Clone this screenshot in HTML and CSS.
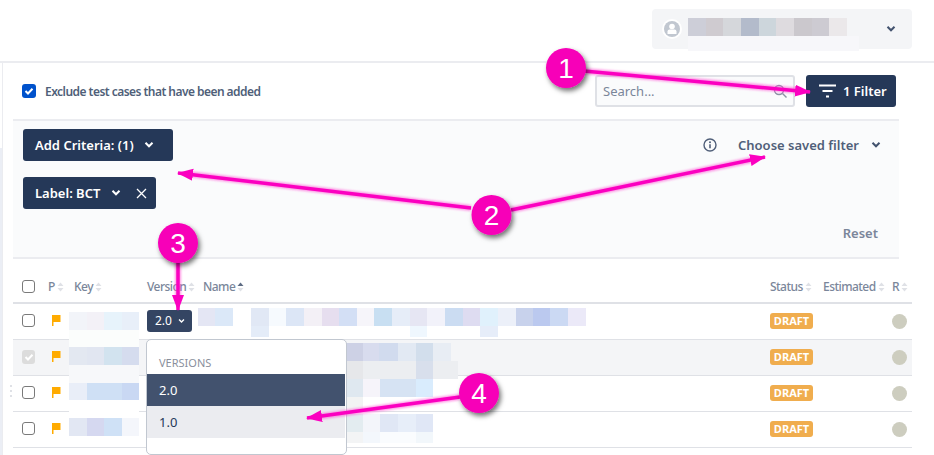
FILE: index.html
```html
<!DOCTYPE html>
<html lang="en">
<head>
<meta charset="utf-8">
<title>Add test cases</title>
<link rel="stylesheet" href="styles.css">
</head>
<body>
<svg width="0" height="0" class="defs">
  <defs>
    <symbol id="chev" viewBox="0 0 10 8"><path d="M1.5 1.8 5 5.3l3.5-3.5" fill="none" stroke="currentColor" stroke-width="2"/></symbol>
    <symbol id="sort" viewBox="0 0 7 10"><path d="M3.5 .5 6.5 4h-6zM3.5 9.500 .5 6h6z" fill="#dfe1e6"/></symbol>
    <symbol id="sortup" viewBox="0 0 7 10"><path d="M3.500 .5 6.500 4h-6z" fill="#5e6c84"/><path d="M3.500 9.500 .5 6h6z" fill="#dfe1e6"/></symbol>
    <symbol id="flag" viewBox="0 0 9 11"><path d="M0 0h8.500v7H1.500v4H0z" fill="#ffab00"/></symbol>
  </defs>
</svg>
<div class="app">
  <header class="topbar">
    <div class="usermenu">
      <svg class="avatar" width="20" height="20" viewBox="0 0 20 20"><circle cx="10" cy="10" r="10" fill="#fff"/><circle cx="10" cy="10" r="8" fill="#c1c7d0"/><circle cx="10" cy="7.500" r="2.800" fill="#fff"/><path d="M5.500 15v-2.500q0-2 2-2h5q2 0 2 2V15z" fill="#fff"/></svg>
      <svg class="chev usermenu-chev"><use href="#chev"/></svg>
    </div>
  </header>
  <div class="main">
    <div class="rail"><div class="rail-fill"></div></div>
    <div class="content">
      <div class="toolbar">
        <label class="exclude">
          <svg width="14" height="14" viewBox="0 0 14 14"><rect width="14" height="14" rx="3" fill="#0052cc"/><path d="M3.500 7 6 9.500 10.500 4.800" fill="none" stroke="#fff" stroke-width="2"/></svg>
          <span>Exclude test cases that have been added</span>
        </label>
        <div class="search">
          <span class="search-text">Search...</span>
          <svg width="14" height="14" viewBox="0 0 14 14"><circle cx="6" cy="6" r="4.500" fill="none" stroke="#8993a4" stroke-width="1.400"/><path d="m9.500 9.500 4 4" stroke="#8993a4" stroke-width="1.400"/></svg>
        </div>
        <button class="btn filter-btn" type="button">
          <svg width="18" height="14" viewBox="0 0 18 14"><path d="M0 1.500h17M3.500 7h10M7 12.500h3" stroke="#fff" stroke-width="2"/></svg>
          <span>1 Filter</span>
        </button>
      </div>
      <section class="panel">
        <div class="panel-top">
          <button class="btn criteria" type="button"><span>Add Criteria: (1)</span><svg class="chev"><use href="#chev"/></svg></button>
          <div class="saved">
            <svg class="info" width="14" height="14" viewBox="0 0 14 14"><circle cx="7" cy="7" r="6" fill="none" stroke="#505f79" stroke-width="1.400"/><path d="M7 6.300v4" stroke="#505f79" stroke-width="1.600"/><circle cx="7" cy="4.200" r="1" fill="#505f79"/></svg>
            <span>Choose saved filter</span>
            <svg class="chev"><use href="#chev"/></svg>
          </div>
        </div>
        <button class="btn chip" type="button">
          <span>Label: BCT</span><svg class="chev"><use href="#chev"/></svg>
          <svg class="chip-x" width="11" height="11" viewBox="0 0 11 11"><path d="m1 1 9 9M10 1l-9 9" stroke="#fff" stroke-width="1.300"/></svg>
        </button>
        <div class="reset">Reset</div>
      </section>
      <div class="table">
        <div class="row head">
          <span class="box"></span>
          <span class="th">P<svg class="s"><use href="#sort"/></svg></span>
          <span class="th">Key<svg class="s"><use href="#sort"/></svg></span>
          <span class="th">Version<svg class="s"><use href="#sort"/></svg></span>
          <span class="th">Name<svg class="s"><use href="#sortup"/></svg></span>
          <span class="th">Status<svg class="s"><use href="#sort"/></svg></span>
          <span class="th">Estimated<svg class="s"><use href="#sort"/></svg></span>
          <span class="th">R<svg class="s"><use href="#sort"/></svg></span>
        </div>
        <div class="row">
          <span class="box"></span><svg class="flag"><use href="#flag"/></svg><span></span>
          <span><button class="version" type="button">2.0<svg class="chev small"><use href="#chev"/></svg></button></span><span></span>
          <span class="draft">DRAFT</span><span></span><span class="dot"></span>
        </div>
        <div class="row selected">
          <span class="box disabled"><svg width="14" height="14" viewBox="0 0 14 14"><path d="M3.500 7 6 9.500 10.500 4.800" fill="none" stroke="#fff" stroke-width="2"/></svg></span><svg class="flag"><use href="#flag"/></svg><span></span>
          <span></span><span></span>
          <span class="draft">DRAFT</span><span></span><span class="dot"></span>
        </div>
        <div class="row">
          <span class="grip"></span>
          <span class="box"></span><svg class="flag"><use href="#flag"/></svg><span></span>
          <span></span><span></span>
          <span class="draft">DRAFT</span><span></span><span class="dot"></span>
        </div>
        <div class="row">
          <span class="box"></span><svg class="flag"><use href="#flag"/></svg><span></span>
          <span></span><span></span>
          <span class="draft">DRAFT</span><span></span><span class="dot"></span>
        </div>
      </div>
    </div>
  </div>

  <svg class="redactions" width="934" height="455" viewBox="0 0 934 455" shape-rendering="crispEdges" aria-hidden="true">
    <g>
      <rect x="688" y="36" width="171" height="15" fill="#f7f7fa"/>
      <rect x="688" y="18" width="18" height="18" fill="#cdced8"/><rect x="706" y="18" width="17" height="18" fill="#cfcbd0"/><rect x="723" y="18" width="18" height="18" fill="#d5d7db"/><rect x="741" y="18" width="18" height="18" fill="#b3bbcb"/><rect x="759" y="18" width="17" height="18" fill="#cdd6dc"/><rect x="776" y="18" width="18" height="18" fill="#dedbdf"/><rect x="794" y="18" width="18" height="18" fill="#cbc8cd"/><rect x="812" y="18" width="17" height="18" fill="#cdcbd2"/><rect x="829" y="18" width="18" height="18" fill="#ebe8ea"/>
    </g>
    <g>
      <rect x="69" y="312" width="18" height="18" fill="#f2f4f9"/><rect x="87" y="312" width="17" height="18" fill="#f3f1f7"/><rect x="104" y="312" width="18" height="18" fill="#e7f3fb"/><rect x="122" y="312" width="17" height="18" fill="#e8eff9"/>
      <rect x="69" y="330" width="70" height="17" fill="#fbfdfc"/>
      <rect x="69" y="347" width="18" height="18" fill="#e3e8f1"/><rect x="87" y="347" width="17" height="18" fill="#e1e6f1"/><rect x="104" y="347" width="18" height="18" fill="#d2e3ef"/><rect x="122" y="347" width="17" height="18" fill="#d5dcee"/>
      <rect x="69" y="365" width="70" height="18" fill="#f7f8fa"/>
      <rect x="69" y="383" width="18" height="17" fill="#e9eef8"/><rect x="87" y="383" width="35" height="17" fill="#cfe0f5"/><rect x="122" y="383" width="17" height="17" fill="#c9d8f3"/>
      <rect x="69" y="400" width="70" height="18" fill="#fff"/>
      <rect x="69" y="418" width="18" height="18" fill="#e2e7f3"/><rect x="87" y="418" width="17" height="18" fill="#d5d8f0"/><rect x="104" y="418" width="18" height="18" fill="#cfe1f6"/><rect x="122" y="418" width="17" height="18" fill="#f4f6fb"/>
    </g>
    <g>
      <rect x="198" y="308" width="17" height="18" fill="#e4e6f4"/><rect x="215" y="308" width="18" height="18" fill="#dbe8f8"/><rect x="251" y="308" width="18" height="18" fill="#e1e8f5"/><rect x="269" y="308" width="17" height="18" fill="#f6fafe"/><rect x="286" y="308" width="18" height="18" fill="#dce6f6"/><rect x="304" y="308" width="18" height="18" fill="#f3f0f6"/><rect x="322" y="308" width="17" height="18" fill="#e6deef"/><rect x="339" y="308" width="18" height="18" fill="#d3dff5"/><rect x="357" y="308" width="17" height="18" fill="#f6f5fa"/><rect x="374" y="308" width="18" height="18" fill="#c8dff2"/><rect x="392" y="308" width="18" height="18" fill="#e6edf8"/><rect x="410" y="308" width="17" height="18" fill="#e6e6f3"/><rect x="427" y="308" width="18" height="18" fill="#f2f2fa"/><rect x="445" y="308" width="18" height="18" fill="#cbdcf2"/><rect x="463" y="308" width="17" height="18" fill="#dedcf1"/><rect x="480" y="308" width="18" height="18" fill="#e0f1fc"/><rect x="498" y="308" width="18" height="18" fill="#ecf0f9"/><rect x="516" y="308" width="17" height="18" fill="#c8d2ec"/><rect x="533" y="308" width="17" height="18" fill="#bbc9ef"/><rect x="550" y="308" width="18" height="18" fill="#cbd9f3"/><rect x="568" y="308" width="18" height="18" fill="#ebe9f8"/>
      <rect x="251" y="326" width="18" height="11" fill="#e4ecf8"/><rect x="410" y="326" width="17" height="11" fill="#eff7fe"/><rect x="480" y="326" width="18" height="11" fill="#e6edf9"/>
      <rect x="345" y="343" width="18" height="18" fill="#cdd1e5"/><rect x="363" y="343" width="16" height="18" fill="#d8dcee"/><rect x="379" y="343" width="19" height="18" fill="#d1dbee"/><rect x="398" y="343" width="18" height="18" fill="#e2e9f3"/><rect x="416" y="343" width="17" height="18" fill="#d2deec"/><rect x="433" y="343" width="18" height="18" fill="#e8edf4"/>
      <rect x="345" y="361" width="18" height="18" fill="#e6e7ea"/><rect x="363" y="361" width="53" height="18" fill="#eceef1"/><rect x="416" y="361" width="17" height="18" fill="#d8dfec"/><rect x="433" y="361" width="25" height="18" fill="#eceef1"/>
      <rect x="345" y="379" width="18" height="18" fill="#dfe8f0"/><rect x="363" y="379" width="17" height="18" fill="#f6f4fa"/><rect x="380" y="379" width="36" height="18" fill="#d6e3f3"/><rect x="416" y="379" width="17" height="18" fill="#d9ecfd"/>
      <rect x="345" y="397" width="18" height="14" fill="#f2f3f3"/>
      <rect x="345" y="414" width="18" height="18" fill="#e3ecf0"/><rect x="363" y="414" width="17" height="18" fill="#f3f5fa"/><rect x="380" y="414" width="18" height="18" fill="#e0e7f5"/><rect x="398" y="414" width="18" height="18" fill="#e7eef9"/><rect x="416" y="414" width="17" height="18" fill="#e0e7f6"/>
      <rect x="345" y="432" width="18" height="11" fill="#f3f4f5"/><rect x="363" y="432" width="17" height="11" fill="#f3f7fc"/><rect x="380" y="432" width="36" height="11" fill="#fafcfe"/><rect x="416" y="432" width="17" height="11" fill="#f2f7fb"/>
    </g>
  </svg>

  <div class="dropdown">
    <div class="dropdown-title">VERSIONS</div>
    <div class="option active">2.0</div>
    <div class="option hover">1.0</div>
  </div>

  <svg class="annotations" width="934" height="455" viewBox="0 0 934 455" aria-hidden="true">
    <defs>
      <marker id="head" markerUnits="userSpaceOnUse" markerWidth="16" markerHeight="14" refX="15" refY="7" orient="auto"><path d="M0 1 16 7 0 13z" fill="#fb00c0"/></marker>
      <filter id="glow" x="-20%" y="-100%" width="140%" height="300%" filterUnits="objectBoundingBox"><feGaussianBlur stdDeviation="1.200"/></filter>
      <filter id="shadow" x="-40%" y="-40%" width="180%" height="180%"><feDropShadow dx="2" dy="3" stdDeviation="2.500" flood-color="#000" flood-opacity=".55"/></filter>
    </defs>
    <g class="glows" filter="url(#glow)" stroke="#ff40d0" stroke-width="6" opacity=".55">
      <path d="M584 71 802 91"/><path d="M471 208 188 174"/><path d="M511 210 756 159"/><path d="M178 262v38"/><path d="M460 397 316 417"/>
    </g>
    <g stroke="#fb00c0" stroke-width="3.500" fill="none">
      <path d="M584 71 810 92" marker-end="url(#head)"/>
      <path d="M471 208 178 173" marker-end="url(#head)"/>
      <path d="M511 210 765 157" marker-end="url(#head)"/>
      <path d="M178 262v48" marker-end="url(#head)"/>
      <path d="M460 397 307 418" marker-end="url(#head)"/>
    </g>
    <g filter="url(#shadow)" fill="#f700b8">
      <circle cx="566" cy="68" r="20"/><circle cx="491.500" cy="215" r="20"/><circle cx="178" cy="243" r="20"/><circle cx="479" cy="393" r="20"/>
    </g>
    <g class="nums" text-anchor="middle">
      <text x="566" y="78">1</text><text x="491.500" y="225">2</text><text x="178" y="253">3</text><text x="479" y="403">4</text>
    </g>
  </svg>
</div>
</body>
</html>
```

FILE: styles.css
```css
* { box-sizing: border-box; }
html, body { margin: 0; padding: 0; background: #fff; }
body { font-family: "Noto Sans", "Open Sans", sans-serif; font-size: 12px; color: #42526e; overflow: hidden; }
.defs { position: absolute; }
.app { position: relative; width: 934px; height: 455px; overflow: hidden; }

.topbar { height: 63px; padding: 9px 22px 0 0; display: flex; justify-content: flex-end; align-items: flex-start; border-bottom: 2px solid #ebecf0; }
.usermenu { width: 260px; height: 40px; background: #f4f5f7; border-radius: 4px; display: flex; align-items: center; justify-content: space-between; padding: 0 16px 0 10px; }
.chev { width: 10px; height: 8px; color: #fff; flex: none; }
.usermenu-chev { color: #42526e; }

.main { display: flex; }
.rail { width: 3px; height: 392px; border-right: 1px solid #ebecf0; flex: none; display: flex; flex-direction: column; justify-content: flex-end; }
.rail-fill { height: 307px; background: #ebeef5; }
.content { width: 899px; padding-left: 10px; }

.toolbar { height: 56px; display: flex; align-items: flex-start; padding: 12px 6px 0 9px; }
.exclude { display: flex; align-items: center; gap: 9px; height: 32px; margin-right: auto; font-size: 12px; letter-spacing: -.54px; font-weight: 600; color: #505f79; }
.exclude svg { flex: none; }
.search { width: 200px; height: 32px; border: 2px solid #dfe1e6; border-radius: 3px; background: #fafbfc; display: flex; align-items: center; justify-content: space-between; padding: 0 6px 0 6px; margin-right: 11px; }
.search-text { font-size: 13px; color: #7a869a; }
.btn { border: 0; border-radius: 3px; background: #253858; color: #fff; font-family: inherit; font-weight: 600; font-size: 13px; height: 32px; display: flex; align-items: center; padding: 0; }
.filter-btn { width: 90px; padding-left: 13px; gap: 6px; }
.panel { width: 886px; height: 140px; background: #fafbfc; border-top: 2px solid #ebecf0; border-bottom: 2px solid #ebecf0; padding: 8px 18px 0 10px; display: flex; flex-direction: column; }
.panel-top { display: flex; justify-content: space-between; align-items: center; }
.criteria { width: 150px; padding-left: 12px; gap: 10px; }
.saved { display: flex; align-items: center; font-size: 13px; font-weight: 600; color: #505f79; }
.saved .info { margin-right: 21px; }
.saved .chev { color: #42526e; margin-left: 12px; }
.chip { width: 133px; padding-left: 12px; margin-top: 16px; }
.chip .chev { margin-left: 11px; }
.chip-x { margin-left: 15px; }
.reset { margin: 15px 3px 0 0; text-align: right; font-size: 13px; font-weight: 600; color: #7a869a; line-height: 18px; }

.table { width: 899px; margin-top: 11px; }
.row { position: relative; display: grid; grid-template-columns: 26px 26px 73px 56px 567px 53px 69px 27px; align-items: center; height: 36px; padding: 0 0 2px 9px; border-bottom: 1px solid #dfe1e6; }
.head { height: 34px; padding-bottom: 0; border-bottom: 2px solid #dfe1e6; }
.selected { background: #f4f5f7; }
.box { width: 13px; height: 13px; border: 1.500px solid #7a7a7a; border-radius: 3px; background: #fff; display: block; }
.box.disabled { background: #dcdcdc; border: 0; width: 13px; height: 14px; }
.th { display: flex; align-items: center; font-weight: 500; font-size: 12px; letter-spacing: -.55px; color: #7a869a; white-space: nowrap; margin-top: 1px; }
.s { width: 7px; height: 10px; margin-left: 2px; flex: none; }
.flag { width: 9px; height: 11px; margin-left: 4px; }
.version { width: 45px; height: 22px; background: #344563; color: #fff; border: 0; border-radius: 3px; font-family: inherit; font-size: 12px; padding: 0 0 0 8px; display: flex; align-items: center; gap: 6px; }
.small { width: 7px; height: 6px; }
.draft { justify-self: start; width: 43px; height: 16px; line-height: 16px; border-radius: 3px; background: #f0ad4e; color: #fff; font-size: 11px; font-weight: 700; text-align: center; }
.dot { width: 15px; height: 15px; border-radius: 50%; background: #cdcdbf; margin-top: 2px; }
.grip { position: absolute; left: -3px; top: 9px; width: 2px; height: 12px; background: repeating-linear-gradient(#dfe1e6 0 2px, transparent 2px 5px); }

.redactions, .annotations { position: absolute; left: 0; top: 0; pointer-events: none; }
.dropdown { position: absolute; left: 146px; top: 339px; width: 201px; height: 116px; background: #fff; border: 1px solid #c1c7d0; border-radius: 5px; padding-top: 14px; padding-right: 1px; }
.dropdown-title { height: 20px; padding-left: 12px; font-size: 11px; color: #8a8f9c; line-height: 18px; }
.option { height: 32px; line-height: 32px; padding-left: 12px; font-size: 13px; color: #253858; }
.option.active { background: #42526e; color: #fff; }
.option.hover { background: #ebecf0; }
.nums text { font-family: "Liberation Sans", Arial, sans-serif; font-size: 28px; fill: #fff; }
```
